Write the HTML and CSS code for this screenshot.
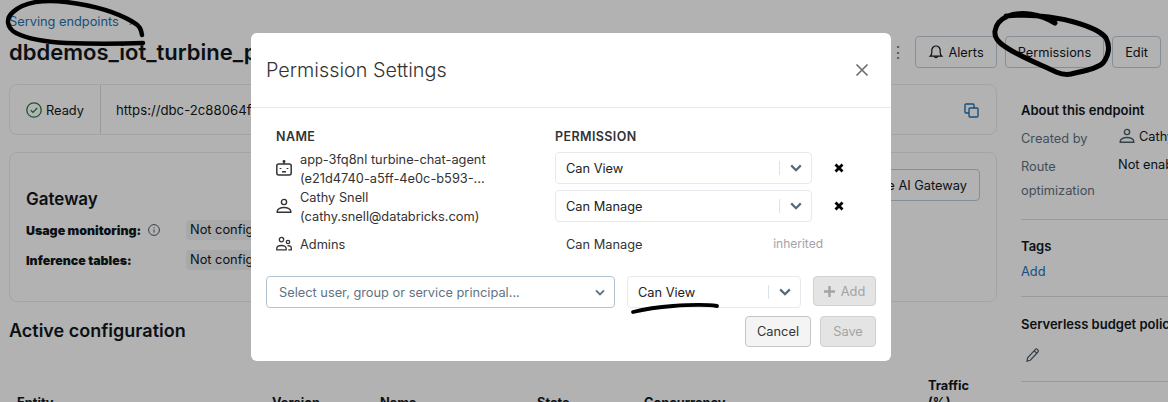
FILE: index.html
```html
<!DOCTYPE html>
<html lang="en">
<head>
<meta charset="UTF-8" />
<title>Serving endpoint - Permission Settings</title>
<link rel="stylesheet" href="styles.css">
</head>
<body>

<svg class="defs" width="0" height="0">
	<symbol id="chev" viewBox="0 0 12 8"><path d="M1.2 1.4 6 6.2l4.8-4.8" fill="none" stroke="currentColor" stroke-width="2.2"/></symbol>
	<symbol id="cross" viewBox="0 0 10 10"><path d="M1.5 1.5l7 7M8.5 1.5l-7 7" fill="none" stroke="#000" stroke-width="2.8"/></symbol>
	<symbol id="person" viewBox="0 0 16 16"><circle cx="8" cy="4" r="2.6" fill="none" stroke="currentColor" stroke-width="1.4"/><path d="M1.2 14.2v-.8c0-2.2 3-3.9 6.8-3.9s6.8 1.7 6.8 3.9v.8z" fill="none" stroke="currentColor" stroke-width="1.4"/></symbol>
</svg>

<div class="page">
	<div class="main">
		<div class="crumbs"><a class="link">Serving endpoints</a><span class="sep">›</span></div>
		<div class="titlebar">
			<h1>dbdemos_iot_turbine_prediction</h1>
			<div class="actions">
				<span class="kebab">⋮</span>
				<button class="btn">
					<svg width="16" height="16" viewBox="0 0 16 16" fill="none" stroke="currentColor" stroke-width="1.2"><path d="M2.2 12.2c1.1-1 1.6-2 1.6-3.6V6.2a4.2 4.2 0 0 1 8.4 0v2.4c0 1.6.5 2.6 1.6 3.6z"/><path d="M6.3 12.4a1.8 1.8 0 0 0 3.4 0"/></svg>
					Alerts
				</button>
				<button class="btn">Permissions</button>
				<button class="btn">Edit</button>
			</div>
		</div>

		<div class="card status">
			<div class="ready">
				<svg width="16" height="16" viewBox="0 0 16 16" fill="none" stroke="#277c43" stroke-width="1.3"><circle cx="8" cy="8" r="7.2"/><path d="M4.8 8.2 7 10.4l4.2-4.4"/></svg>
				Ready
			</div>
			<div class="url">
				<span>https://dbc-2c88064f-a1b2.cloud.databricks.com/serving-endpoints/dbdemos_iot_turbine/invocations</span>
				<svg width="15" height="15" viewBox="0 0 15 15" fill="none" stroke="#2272b4" stroke-width="1.4"><rect x="1" y="1" width="9" height="9" rx="1"/><rect x="5" y="5" width="9" height="9" rx="1" fill="#fff"/></svg>
			</div>
		</div>

		<div class="card gateway">
			<div class="gw-left">
				<h2>Gateway</h2>
				<div class="gw-row">
					<b>Usage monitoring:</b>
					<svg class="info" width="12" height="12" viewBox="0 0 12 12" fill="none" stroke="#4a5d6b" stroke-width="1"><circle cx="6" cy="6" r="5.4"/><path d="M6 5.4v3.2M6 3.2v1.1"/></svg>
					<span class="tag">Not configured</span>
				</div>
				<div class="gw-row">
					<b>Inference tables:</b>
					<span class="tag">Not configured</span>
				</div>
			</div>
			<button class="btn gw-btn">Configure AI Gateway</button>
		</div>

		<h2 class="active">Active configuration</h2>
		<div class="cols">
			<b>Entity</b><b>Version</b><b>Name</b><b>State</b><b>Concurrency</b><b>Traffic<br>(%)</b>
		</div>
	</div>

	<div class="side">
		<section class="about">
			<h3>About this endpoint</h3>
			<div class="about-grid">
				<span class="key">Created by</span>
				<span class="val"><svg width="16" height="16" class="who"><use href="#person"/></svg>Cathy Snell</span>
				<span class="key">Route optimization</span>
				<span class="val">Not enabled</span>
			</div>
		</section>
		<section class="tags">
			<h3>Tags</h3>
			<a class="link">Add</a>
		</section>
		<section class="budget">
			<h3>Serverless budget policy</h3>
			<svg width="16" height="16" viewBox="0 0 16 16" fill="none" stroke="#4a5d6b" stroke-width="1.2"><path d="M2 14.2l.6-3.4 7.6-8.2c.6-.7 1.5-.7 2.1-.2l.6.6c.6.6.6 1.4 0 2L5.3 13.2z"/><path d="M9.2 3.8l2.9 2.8"/></svg>
		</section>
	</div>
</div>

<div class="backdrop"></div>

<div class="modal">
	<div class="modal-head">
		<span class="modal-title">Permission Settings</span>
		<svg width="14" height="14" viewBox="0 0 14 14" fill="none" stroke="#6f6f6f" stroke-width="1.7"><path d="M1.5 1.5l11 11M12.5 1.5l-11 11"/></svg>
	</div>
	<div class="modal-body">
		<div class="perm-table">
			<div class="th">NAME</div><div class="th">PERMISSION</div><div></div>

			<div class="who-cell">
				<svg width="16" height="16" viewBox="0 0 16 16" fill="none" stroke="#333" stroke-width="1.5"><rect x=".8" y="4" width="14.4" height="11" rx="2"/><path d="M8 4V1.5"/><circle cx="8" cy="1.4" r=".7"/><path d="M4.5 8v1M11.5 8v1" stroke-width="1.7"/><path d="M6 11.8h4"/></svg>
				<span class="two">app-3fq8nl turbine-chat-agent<br>(e21d4740-a5ff-4e0c-b593-...</span>
			</div>
			<div class="sel"><span>Can View</span><i></i><svg class="chev" width="12" height="8"><use href="#chev"/></svg></div>
			<svg class="del" width="10" height="10"><use href="#cross"/></svg>

			<div class="who-cell">
				<svg width="16" height="16"><use href="#person"/></svg>
				<span class="two">Cathy Snell<br>(cathy.snell@databricks.com)</span>
			</div>
			<div class="sel"><span>Can Manage</span><i></i><svg class="chev" width="12" height="8"><use href="#chev"/></svg></div>
			<svg class="del" width="10" height="10"><use href="#cross"/></svg>

			<div class="who-cell">
				<svg width="16" height="16" viewBox="0 0 16 16" fill="none" stroke="#333" stroke-width="1.3"><circle cx="5.5" cy="3.6" r="2.2"/><circle cx="12" cy="6" r="1.7"/><path d="M.8 13.8v-1.2c0-1.8 2-3.1 4.7-3.1s4.7 1.3 4.7 3.1v1.2z"/><path d="M11.5 9.6c2 0 3.8.8 3.8 2.4v1.8h-3"/></svg>
				<span>Admins</span>
			</div>
			<div class="inherit"><span>Can Manage</span><em>inherited</em></div>
			<div></div>
		</div>

		<div class="add-row">
			<div class="picker"><span>Select user, group or service principal...</span><svg width="10" height="7"><use href="#chev"/></svg></div>
			<div class="sel sel-new"><span>Can View</span><i></i><svg class="chev" width="12" height="8"><use href="#chev"/></svg></div>
			<button class="mbtn off add"><svg width="11" height="11" viewBox="0 0 11 11" stroke="#a3a3a3" stroke-width="2.4"><path d="M5.5 0v11M0 5.5h11"/></svg>Add</button>
		</div>

		<div class="foot">
			<button class="mbtn">Cancel</button>
			<button class="mbtn off">Save</button>
		</div>
	</div>
</div>

<!-- pen marks drawn over the screenshot -->
<svg class="ink" width="1168" height="402" viewBox="0 0 1168 402" fill="none" stroke="#000" stroke-linecap="round" stroke-linejoin="round">
	<path stroke-width="4.5" d="M142 35c-1-6-2-9-9-13C115 11 90 5 66 2 44-1 24 2 13 12 5 19 7 28 16 33c12 6 30 9 50 10 26 1 52 1 77 0"/>
	<path stroke-width="5" d="M1006 16c22-2 46 0 68 6 14 4 27 9 32 16 4 8 3 17-3 25-6 6-20 8-32 11-5 1-10 0-15-2-15-7-30-13-44-21-10-6-18-11-17-20 1-7 6-12 13-15 14-5 32-2 47 7"/>
	<path stroke-width="3.8" d="M633 312c12-3 26-5 40-6 14-1 30-2 44 0"/>
</svg>

</body>
</html>
```

FILE: styles.css
```css
*
{
	box-sizing: border-box;
}

html, body
{
	margin: 0;
	height: 402px;
	overflow: hidden;
}

body
{
	position: relative;
	font-family: Inter, "Noto Sans", sans-serif;
	font-size: 12.8px;
	color: #11171c;
	background-color: #fff;
}

.defs
{
	position: absolute;
}

h1, h2, h3
{
	margin: 0;
}

.link
{
	color: #2272b4;
}

.page
{
	display: flex;
	gap: 24px;
	padding-left: 9px;
}

.main
{
	width: 988px;
	flex: none;
}

.crumbs
{
	display: flex;
	gap: 10px;
	height: 20px;
	margin-top: 12px;
	line-height: 20px;
}

.sep
{
	color: #5f7281;
}

.titlebar
{
	display: flex;
	justify-content: space-between;
	align-items: center;
	height: 32px;
	margin-top: 4px;
}

h1
{
	font-size: 22px;
	font-weight: 600;
	white-space: nowrap;
}

.actions
{
	display: flex;
	align-items: center;
	gap: 8px;
	margin-right: -164px;
}

.kebab
{
	width: 6px;
	margin-right: 11px;
	font-size: 16px;
	color: #5f7281;
}

.btn
{
	display: inline-flex;
	align-items: center;
	gap: 4px;
	height: 32px;
	padding: 0 12px;
	font: inherit;
	color: #11171c;
	background-color: #fff;
	border: 1px solid #c0cdd8;
	border-radius: 4px;
}

.card
{
	border: 1px solid #e8ecf0;
	border-radius: 8px;
}

.status
{
	display: flex;
	height: 51px;
	margin-top: 16px;
}

.ready
{
	display: flex;
	align-items: center;
	gap: 4px;
	width: 91px;
	padding: 1px 0 0 16px;
	border-right: 1px solid #d8dfe6;
}

.url
{
	flex: 1;
	display: flex;
	justify-content: space-between;
	align-items: center;
	padding: 1px 17px 0 15px;
	font-size: 13.2px;
}

.gateway
{
	display: flex;
	justify-content: space-between;
	align-items: flex-start;
	height: 150px;
	margin-top: 17px;
	padding: 16px 16px 0;
}

.gw-left
{
	padding-top: 19px;
}

h2
{
	font-size: 17px;
	font-weight: 600;
	line-height: 22px;
}

.gw-row
{
	position: relative;
	display: flex;
	align-items: center;
	height: 20px;
	margin-bottom: 10px;
	font-size: 12.4px;
	font-weight: 600;
}

.gw-row:first-of-type, h2 + .gw-row
{
	margin-top: 10px;
}

.info
{
	margin-left: 7px;
}

.tag
{
	position: absolute;
	left: 160px;
	padding: 0 4px;
	font-size: 12.8px;
	font-weight: 400;
	line-height: 20px;
	white-space: nowrap;
	background-color: #f0f2f4;
	border-radius: 4px;
}

.active
{
	margin-top: 18px;
	font-size: 18px;
}

.cols
{
	display: grid;
	grid-template-columns: 255px 108px 157px 107px 284px 60px;
	align-items: end;
	height: 69px;
	padding-left: 8px;
	line-height: 17px;
}

.side
{
	flex: 1;
	padding-top: 100px;
	white-space: nowrap;
}

.side section
{
	border-bottom: 1px solid #d8dfe6;
	margin-right: -20px;
}

h3
{
	font-size: 13px;
	font-weight: 600;
	line-height: 20px;
}

.about
{
	height: 120px;
}

.about-grid
{
	display: grid;
	grid-template-columns: 97px 1fr;
	gap: 4px 0;
	margin-top: 7px;
}

.key
{
	color: #5f7281;
	white-space: normal;
	line-height: 24px;
	padding-right: 10px;
}

.val
{
	display: flex;
	align-items: flex-start;
	gap: 4px;
	margin-top: -2px;
	line-height: 24px;
}

.who
{
	margin: 3px 0 0 1px;
	color: #4a5d6b;
}

.tags
{
	height: 77px;
	padding-top: 16px;
}

.tags h3
{
	margin-bottom: 8px;
}

.budget
{
	height: 85px;
	padding-top: 17px;
}

.budget svg
{
	display: block;
	margin: 13px 0 0 4px;
}

.backdrop
{
	position: absolute;
	inset: 0;
	background-color: rgba(0, 0, 0, 0.3);
}

.modal
{
	position: absolute;
	left: 251px;
	top: 33px;
	width: 640px;
	height: 328px;
	background-color: #fff;
	border-radius: 6px;
}

.modal-head
{
	display: flex;
	justify-content: space-between;
	align-items: center;
	height: 75px;
	padding: 0 22px 0 15px;
	border-bottom: 1px solid #e8e8e8;
}

.modal-title
{
	font-size: 19.8px;
	font-weight: 300;
	color: #333;
}

.modal-body
{
	padding: 19px 15px 0;
}

.perm-table
{
	display: grid;
	grid-template-columns: 279px 257px 1fr;
	grid-template-rows: 19px;
	grid-auto-rows: 32px;
	gap: 6px 0;
	padding-left: 10px;
	color: #333;
}

.th
{
	padding-top: 1px;
	font-size: 12.5px;
	font-weight: 600;
	letter-spacing: 0.4px;
	line-height: 18px;
}

.who-cell
{
	display: flex;
	align-items: center;
	gap: 8px;
	line-height: 19px;
	color: #333;
}

.who-cell > svg
{
	flex: none;
}

.two
{
	padding-top: 2px;
}

.sel
{
	display: flex;
	align-items: center;
	height: 32px;
	padding-left: 10px;
	color: #222;
	border: 1px solid #e6eaee;
	border-radius: 4px;
}

.sel span
{
	flex: 1;
}

.sel i
{
	width: 1px;
	height: 14px;
	background-color: #dde2e7;
}

.chev
{
	margin: 0 9px 0 10px;
	color: #56697a;
}

.del
{
	align-self: center;
	margin-left: 22px;
}

.inherit
{
	display: flex;
	justify-content: space-between;
	align-items: center;
	width: 268px;
	padding-left: 11px;
}

.inherit em
{
	margin-top: -2px;
	font-style: normal;
	font-size: 12px;
	color: #a3a3a3;
}

.add-row
{
	display: flex;
	align-items: flex-start;
	gap: 12px;
	margin-top: 16px;
}

.picker
{
	display: flex;
	justify-content: space-between;
	align-items: center;
	width: 349px;
	height: 32px;
	padding: 0 9px 0 12px;
	color: #5f7281;
	border: 1px solid #b3c3d3;
	border-radius: 4px;
}

.sel-new
{
	width: 174px;
}

.mbtn
{
	display: inline-flex;
	align-items: center;
	justify-content: center;
	gap: 6px;
	height: 31px;
	padding: 0 12px;
	font: inherit;
	color: #333;
	background-color: #f4f4f4;
	border: 1px solid #c4c4c4;
	border-radius: 4px;
}

.mbtn.off
{
	color: #a3a3a3;
	background-color: #e4e4e4;
	border-color: #d0d0d0;
}

.add
{
	height: 30px;
	width: 63px;
	padding: 0;
}

.foot
{
	display: flex;
	justify-content: flex-end;
	gap: 9px;
	margin-top: 8px;
}

.foot .mbtn
{
	width: 66px;
}

.foot .off
{
	width: 56px;
}

.ink
{
	position: absolute;
	left: 0;
	top: 0;
}
```
